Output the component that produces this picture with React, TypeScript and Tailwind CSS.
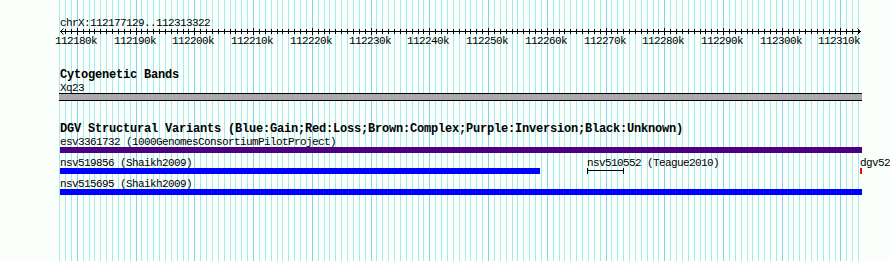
import React from 'react';

// View window shown by the browser panel, in bp.
const START = 112177129;
const END = 112313322;
const LEFT = 60;
const WIDTH = 800;

const toX = (pos: number) => LEFT + ((pos - START) * WIDTH) / (END - START);

const kbs: number[] = [];
for (let k = 112177; k <= 112313; k++) kbs.push(k);

type Feature = {
    id: string;
    label: string;
    x: number;
    width: number;
    kind: 'box' | 'line';
    color?: string;
};

// Three packed rows of the DGV track, left to right.
const rows: Feature[][] = [
    [{ id: 'esv3361732', label: 'esv3361732 (1000GenomesConsortiumPilotProject)', x: 60, width: 802, kind: 'box', color: 'bg-[#4b0082]' }],
    [
        { id: 'nsv519856', label: 'nsv519856 (Shaikh2009)', x: 60, width: 480, kind: 'box', color: 'bg-[#0000ff]' },
        { id: 'nsv510552', label: 'nsv510552 (Teague2010)', x: 587, width: 37, kind: 'line' },
        { id: 'dgv52', label: 'dgv52', x: 860, width: 2, kind: 'box', color: 'bg-[#ff0000]' },
    ],
    [{ id: 'nsv515695', label: 'nsv515695 (Shaikh2009)', x: 60, width: 802, kind: 'box', color: 'bg-[#0000ff]' }],
];

function Grid() {
    return (
        <svg className="pointer-events-none absolute left-0 top-0" width={890} height={261}>
            {kbs.map((k) => {
                const x = Math.round(toX(k * 1000)) + 0.5;
                const major = k % 10 === 0;
                return <line key={k} x1={x} x2={x} y1={0} y2={261} stroke={major ? '#8ecdf0' : '#a6eaec'} strokeWidth={1} />;
            })}
        </svg>
    );
}

function Ruler() {
    return (
        <div className="pt-[13px]">
            <div className="h-[15px] whitespace-nowrap pl-[60px] pt-[3px] font-['Liberation_Mono',monospace] text-[11px] leading-[14px] tracking-[-0.6px] text-black">
                chrX:112177129..112313322
            </div>
            <svg className="block" width={890} height={7}>
                <line x1={60} x2={861} y1={3.5} y2={3.5} stroke="#000" strokeWidth={1} />
                <polyline points="63.5,0.5 60.5,3.5 63.5,6.5" fill="none" stroke="#000" strokeWidth={1} />
                <polyline points="857.5,0.5 860.5,3.5 857.5,6.5" fill="none" stroke="#000" strokeWidth={1} />
                {kbs
                    .filter((k) => k >= 112178)
                    .map((k) => {
                        const x = Math.round(toX(k * 1000)) + 0.5;
                        const major = k % 10 === 0;
                        return <line key={k} x1={x} x2={x} y1={major ? 0 : 1} y2={major ? 7 : 6} stroke="#000" strokeWidth={1} />;
                    })}
            </svg>
            <div className="relative h-[13px]">
                {kbs
                    .filter((k) => k % 10 === 0)
                    .map((k) => (
                        <span
                            key={k}
                            className="absolute top-0 whitespace-nowrap font-['Liberation_Mono',monospace] text-[11px] leading-[13px] tracking-[-0.6px] text-black"
                            style={{ left: Math.round(toX(k * 1000)) - 22 }}
                        >
                            {k}k
                        </span>
                    ))}
            </div>
        </div>
    );
}

function TrackTitle({ children }: { children: React.ReactNode }) {
    return (
        <div className="h-[9px] whitespace-nowrap pl-[60px] font-['Liberation_Mono',monospace] text-[12px] font-bold leading-[13px] tracking-[-0.2px] text-black">
            {children}
        </div>
    );
}

function FeatureGlyph({ f }: { f: Feature }) {
    return (
        <div className="absolute top-0 flex flex-col" style={{ left: f.x }}>
            <div className="h-[15px] whitespace-nowrap pt-[3px] font-['Liberation_Mono',monospace] text-[11px] leading-[14px] tracking-[-0.6px] text-black">
                {f.label}
            </div>
            {f.kind === 'box' ? (
                <div className={`h-[6px] ${f.color}`} style={{ width: f.width }} />
            ) : (
                <svg className="block" width={f.width} height={6}>
                    <line x1={0} x2={f.width} y1={2.5} y2={2.5} stroke="#000" strokeWidth={1} />
                    <line x1={0.5} x2={0.5} y1={0} y2={6} stroke="#000" strokeWidth={1} />
                    <line x1={f.width - 0.5} x2={f.width - 0.5} y1={0} y2={6} stroke="#000" strokeWidth={1} />
                </svg>
            )}
        </div>
    );
}

export default function App() {
    return (
        <div className="relative h-[261px] w-[890px] overflow-hidden bg-[#fbfffb]">
            <Grid />

            <div className="relative">
                <Ruler />

                {/* Cytogenetic band track */}
                <div className="mt-[21px]">
                    <TrackTitle>Cytogenetic Bands</TrackTitle>
                    <div className="h-[15px] whitespace-nowrap pl-[60px] pt-[3px] font-['Liberation_Mono',monospace] text-[11px] leading-[14px] tracking-[-0.6px] text-black">
                        Xq23
                    </div>
                    <div className="ml-[59px] h-[8px] w-[803px] border-y border-black bg-[#aaaaaa]" />
                </div>

                {/* DGV structural variants track */}
                <div className="mt-[22px]">
                    <TrackTitle>DGV Structural Variants (Blue:Gain;Red:Loss;Brown:Complex;Purple:Inversion;Black:Unknown)</TrackTitle>
                    {rows.map((row, i) => (
                        <div key={i} className="relative h-[21px]">
                            {row.map((f) => (
                                <FeatureGlyph key={f.id} f={f} />
                            ))}
                        </div>
                    ))}
                </div>
            </div>
        </div>
    );
}
